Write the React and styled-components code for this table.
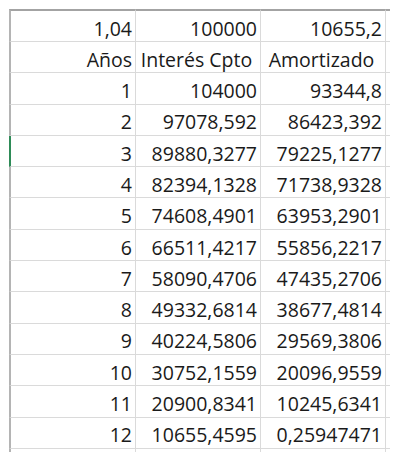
import React from "react";
import styled, { createGlobalStyle } from "styled-components";

const GlobalStyle = createGlobalStyle`
  html, body {
    margin: 0;
    padding: 0;
    background: #ffffff;
    overflow: hidden;
  }
`;

const Page = styled.div`
  width: 400px;
  height: 452px;
  padding: 9px 0 0 9px;
  box-sizing: border-box;
  overflow: hidden;
`;

const Viewport = styled.div`
  width: 381px;
  overflow: hidden;
`;

const Sheet = styled.div`
  display: grid;
  grid-template-columns: 127px 125px 125px 125px;
  grid-auto-rows: 31.3px;
  grid-template-rows: 33px;
  width: 502px;
  font-family: "Open Sans", "Liberation Sans", sans-serif;
  font-size: 19.5px;
  line-height: 1;
  color: #1a1a1a;
`;

const Cell = styled.div`
  display: flex;
  align-items: flex-end;
  justify-content: ${(p) => (p.$center ? "center" : "flex-end")};
  box-sizing: border-box;
  padding: 0 3px 3px 0;
  border-right: 1px solid #dadada;
  border-bottom: 1px solid #dadada;
  border-top: ${(p) => (p.$top ? "2px solid #a3a3a3" : "none")};
  border-left: ${(p) =>
    p.$first ? `2px solid ${p.$marked ? "#2e8b57" : "#b4b4b4"}` : "none"};
  white-space: nowrap;
`;

const rows = [
  ["1,04", "100000", "10655,2"],
  ["Años", "Interés Cpto", "Amortizado"],
  ["1", "104000", "93344,8"],
  ["2", "97078,592", "86423,392"],
  ["3", "89880,3277", "79225,1277"],
  ["4", "82394,1328", "71738,9328"],
  ["5", "74608,4901", "63953,2901"],
  ["6", "66511,4217", "55856,2217"],
  ["7", "58090,4706", "47435,2706"],
  ["8", "49332,6814", "38677,4814"],
  ["9", "40224,5806", "29569,3806"],
  ["10", "30752,1559", "20096,9559"],
  ["11", "20900,8341", "10245,6341"],
  ["12", "10655,4595", "0,25947471"],
  ["", "", ""],
];

export default function App() {
  return (
    <Page>
      <GlobalStyle />
      <Viewport>
        <Sheet>
          {rows.map((r, i) =>
            [...r, ""].map((v, j) => (
              <Cell
                key={`${i}-${j}`}
                $top={i === 0}
                $first={j === 0}
                $marked={i === 4}
                $center={i === 1 && j > 0}
              >
                {v}
              </Cell>
            ))
          )}
        </Sheet>
      </Viewport>
    </Page>
  );
}
